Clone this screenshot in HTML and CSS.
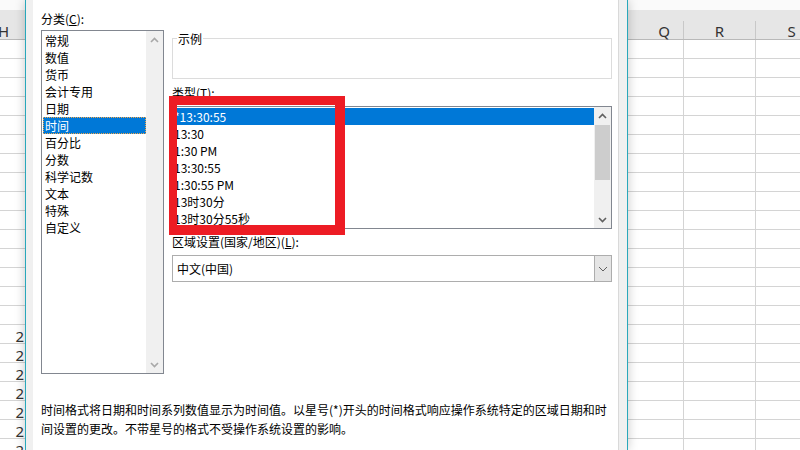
FILE: index.html
```html
<!DOCTYPE html>
<html lang="zh-CN">
<head>
  <meta charset="UTF-8">
  <title>设置单元格格式</title>
  <link rel="stylesheet" href="styles.css">
</head>
<body>

  <div class="screen">

    <div class="sheet sheet-left">
      <div class="sheet-top"></div>
      <div class="sheet-head">
        <div class="head-cell head-h">H</div>
      </div>
      <div class="sheet-body">
        <div class="col col-h">
          <div class="num-list">
            <div class="num">2</div>
            <div class="num">2</div>
            <div class="num">2</div>
            <div class="num">2</div>
            <div class="num">2</div>
            <div class="num">2</div>
            <div class="num">2</div>
          </div>
        </div>
      </div>
    </div>

    <div class="dialog">
      <div class="page">
        <div class="page-grid">

          <div class="col-left">
            <div class="lbl">分类(<u>C</u>):</div>
            <div class="listbox cat-list">
              <ul class="items">
                <li>常规</li>
                <li>数值</li>
                <li>货币</li>
                <li>会计专用</li>
                <li>日期</li>
                <li class="sel">时间</li>
                <li>百分比</li>
                <li>分数</li>
                <li>科学记数</li>
                <li>文本</li>
                <li>特殊</li>
                <li>自定义</li>
              </ul>
              <div class="vscroll off">
                <span class="arrow"><svg width="9" height="6" viewBox="0 0 9 6"><path d="M1 5 L4.5 1.5 L8 5" /></svg></span>
                <span class="track"></span>
                <span class="arrow"><svg width="9" height="6" viewBox="0 0 9 6"><path d="M1 1 L4.5 4.5 L8 1" /></svg></span>
              </div>
            </div>
          </div>

          <div class="col-right">
            <fieldset class="sample">
              <legend>示例</legend>
              <div class="sample-body"></div>
            </fieldset>

            <div class="lbl lbl-type">类型(<u>T</u>):</div>
            <div class="listbox type-list">
              <ul class="items">
                <li class="sel">*13:30:55</li>
                <li>13:30</li>
                <li>1:30 PM</li>
                <li>13:30:55</li>
                <li>1:30:55 PM</li>
                <li>13时30分</li>
                <li>13时30分55秒</li>
              </ul>
              <div class="vscroll">
                <span class="arrow"><svg width="9" height="6" viewBox="0 0 9 6"><path d="M1 5 L4.5 1.5 L8 5" /></svg></span>
                <span class="thumb"></span>
                <span class="track"></span>
                <span class="arrow"><svg width="9" height="6" viewBox="0 0 9 6"><path d="M1 1 L4.5 4.5 L8 1" /></svg></span>
              </div>
            </div>

            <div class="lbl lbl-region">区域设置(国家/地区)(<u>L</u>):</div>
            <div class="combo">
              <span class="combo-text">中文(中国)</span>
              <span class="combo-btn"><svg width="10" height="6" viewBox="0 0 10 6"><path d="M1 1 L5 5 L9 1" /></svg></span>
            </div>
          </div>

        </div>

        <p class="desc">时间格式将日期和时间系列数值显示为时间值。以星号(*)开头的时间格式响应操作系统特定的区域日期和时间设置的更改。不带星号的格式不受操作系统设置的影响。</p>

        <div class="mark"></div>
      </div>
    </div>

    <div class="sheet sheet-right">
      <div class="sheet-top"></div>
      <div class="sheet-head">
        <div class="head-cell head-q">Q</div>
        <div class="head-cell head-r">R</div>
        <div class="head-cell head-s">S</div>
      </div>
      <div class="sheet-body">
        <div class="col col-q"></div>
        <div class="col col-r"></div>
        <div class="col col-s"></div>
      </div>
    </div>

  </div>

</body>
</html>
```

FILE: styles.css
```css
    * {
      box-sizing: border-box;
    }

    body {
      margin: 0;
      width: 800px;
      height: 450px;
      overflow: hidden;
      background-color: #fff;
      font-family: "Noto Sans CJK SC", "Noto Sans", sans-serif;
      font-size: 12px;
      color: #000;
    }

    .screen {
      display: flex;
      height: 450px;
    }

    /* spreadsheet behind the dialog */
    .sheet {
      background-color: #fff;
      overflow: hidden;
      font-family: "Noto Sans", "DejaVu Sans", sans-serif;
      font-size: 15px;
      color: #333;
    }

    .sheet-left {
      width: 25px;
      flex: none;
    }

    .sheet-right {
      flex: 1;
    }

    .sheet-top {
      height: 10px;
      background-color: #fafafa;
    }

    .sheet-head {
      height: 30px;
      background-color: #e6e6e6;
      border-bottom: 1px solid #b9b9b9;
      display: flex;
      align-items: flex-end;
    }

    .head-cell {
      flex: none;
      height: 18px;
      padding-top: 1px;
      line-height: 18px;
      text-align: center;
      border-right: 1px solid #c8c8c8;
    }

    .head-h {
      width: 72px;
      margin-left: -32px;
    }

    .head-q { width: 56px; padding-left: 17px; }
    .head-r { width: 72px; }
    .head-s { width: 72px; }

    .sheet-body {
      display: flex;
      height: 410px;
    }

    .col {
      flex: none;
      height: 100%;
      border-right: 1px solid #d4d4d4;
      background: repeating-linear-gradient(to bottom, transparent 0 18px, #d4d4d4 18px 19px);
    }

    .col-h { width: 25px; border-right: none; }
    .col-q { width: 56px; }
    .col-r { width: 72px; }
    .col-s { width: 72px; }

    .num-list {
      padding-top: 285px;
    }

    .num {
      height: 19px;
      line-height: 22px;
      text-align: right;
      padding-right: 1px;
    }

    /* format cells dialog */
    .dialog {
      flex: none;
      width: 603px;
      display: flex;
      padding: 0 8px 0 7px;
      background-color: #f0f0f0;
      border-left: 1px solid #29a8bb;
      border-right: 1px solid #29a8bb;
      position: relative;
      z-index: 1;
      box-shadow: 0 0 10px rgba(0, 0, 0, 0.22);
    }

    .page {
      flex: 1;
      background-color: #fff;
      border-right: 1px solid #d9d9d9;
      padding: 10px 0 0 8px;
      position: relative;
    }

    .page-grid {
      display: grid;
      grid-template-columns: 123px 440px;
      column-gap: 8px;
      align-items: start;
    }

    .lbl {
      height: 17px;
      line-height: 17px;
      white-space: nowrap;
    }

    .lbl-type {
      margin-top: 5px;
    }

    .lbl-region {
      margin-top: 4px;
    }

    .listbox {
      display: flex;
      border: 1px solid #828790;
      background-color: #fff;
    }

    .cat-list {
      height: 344px;
      margin-top: 3px;
    }

    .type-list {
      height: 123px;
      margin-top: 5px;
    }

    .items {
      list-style: none;
      margin: 0;
      padding: 1px 0 0 1px;
      flex: 1;
      min-width: 0;
    }

    .items li {
      height: 17px;
      line-height: 17px;
      padding-left: 2px;
      white-space: nowrap;
      overflow: hidden;
    }

    .type-list .items {
      padding-left: 0;
    }

    .type-list .items li {
      padding-left: 1px;
    }

    .items li.sel {
      background-color: #0078d7;
      color: #fff;
    }

    .cat-list .items li.sel {
      outline: 1px dotted #f2a74a;
      outline-offset: -1px;
    }

    .vscroll {
      width: 17px;
      flex: none;
      display: flex;
      flex-direction: column;
      background-color: #f0f0f0;
    }

    .arrow {
      height: 17px;
      flex: none;
      display: flex;
      align-items: center;
      justify-content: center;
    }

    .arrow path,
    .combo-btn path {
      fill: none;
      stroke: #606060;
      stroke-width: 1.6;
    }

    .vscroll.off .arrow path {
      stroke: #a8a8a8;
    }

    .track {
      flex: 1;
    }

    .thumb {
      height: 55px;
      margin: 1px 1px 0;
      flex: none;
      background-color: #cdcdcd;
    }

    .sample {
      margin: 20px 0 0;
      padding: 0;
      min-width: 0;
      border: 1px solid #dcdcdc;
    }

    .sample legend {
      padding: 0 1px;
      margin-left: 4px;
      line-height: 17px;
    }

    .sample-body {
      height: 31px;
    }

    .combo {
      margin-top: 5px;
      height: 27px;
      display: flex;
      border: 1px solid #adadad;
    }

    .combo-text {
      flex: 1;
      padding-left: 4px;
      line-height: 25px;
    }

    .combo-btn {
      width: 17px;
      display: flex;
      align-items: center;
      justify-content: center;
      background-color: #e5e5e5;
      border-left: 1px solid #adadad;
    }

    .combo-btn path {
      stroke-width: 1;
    }

    .desc {
      margin: 26px 0 0;
      width: 572px;
      line-height: 19px;
    }

    /* red highlight drawn over the type list */
    .mark {
      position: absolute;
      left: 136px;
      top: 96px;
      width: 176px;
      height: 139px;
      border: solid #ed1c24;
      border-width: 9px 10px 10px 8px;
    }
```
